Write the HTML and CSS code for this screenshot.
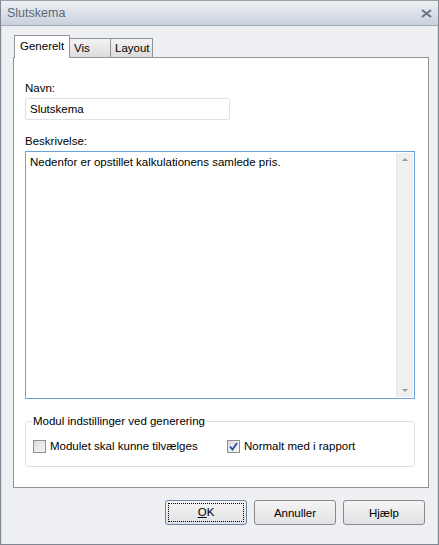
FILE: index.html
```html
<!DOCTYPE html>
<html lang="da">
<head>
    <meta charset="UTF-8">
    <title>Slutskema</title>
    <link rel="stylesheet" href="styles.css">
</head>
<body>

    <div class="window">
        <div class="titlebar">
            <span class="title">Slutskema</span>
            <svg class="close" width="11" height="9" viewBox="0 0 11 9">
                <path d="M1 1 L10 8 M10 1 L1 8" stroke="#6b7684" stroke-width="2"/>
            </svg>
        </div>

        <div class="client">
            <div class="tabs">
                <div class="tab active">Generelt</div>
                <div class="tab">Vis</div>
                <div class="tab">Layout</div>
            </div>

            <div class="panel">
                <div class="field">
                    <div class="label">Navn:</div>
                    <div class="input">Slutskema</div>
                </div>

                <div class="field grow">
                    <div class="label">Beskrivelse:</div>
                    <div class="textarea">
                        <div class="text">Nedenfor er opstillet kalkulationens samlede pris.</div>
                        <div class="scrollbar">
                            <span class="arrow up"></span>
                            <span class="arrow down"></span>
                        </div>
                    </div>
                </div>

                <fieldset class="group">
                    <legend>Modul indstillinger ved generering</legend>
                    <div class="checks">
                        <label class="check first"><span class="box"></span>Modulet skal kunne tilvælges</label>
                        <label class="check"><span class="box checked">
                            <svg width="11" height="11" viewBox="0 0 11 11">
                                <path d="M2 5.5 L4.5 8.5 L9 2" fill="none" stroke="#2a4fa8" stroke-width="1.8"/>
                            </svg>
                        </span>Normalt med i rapport</label>
                    </div>
                </fieldset>
            </div>

            <div class="buttons">
                <button class="btn default"><span class="focus"><u>O</u>K</span></button>
                <button class="btn">Annuller</button>
                <button class="btn">Hjælp</button>
            </div>
        </div>
    </div>

</body>
</html>
```

FILE: styles.css
```css
body {
    margin: 0;
    padding: 0;
    font-family: "Liberation Sans", Arial, sans-serif;
    font-size: 11.5px;
    color: #000;
    background: #fff;
}

.window {
    width: 439px;
    height: 545px;
    box-sizing: border-box;
    border: 1px solid #7f8792;
    border-top-color: #9aa2ad;
    background-color: #eeeff2;
    display: flex;
    flex-direction: column;
}

.titlebar {
    height: 25px;
    box-sizing: border-box;
    border-bottom: 1px solid #a3abb6;
    background: linear-gradient(#eef0f3, #dde2e9 45%, #c9d1db);
    display: flex;
    align-items: center;
    justify-content: space-between;
    padding: 0 6px 0 6px;
}

.title {
    font-family: "Liberation Sans", Arial, sans-serif;
    font-size: 12.5px;
    color: #5d6876;
}

.client {
    flex: 1;
    display: flex;
    flex-direction: column;
    padding: 9px 9px 0 11px;
    border-left: 1px solid #d8dce2;
    border-right: 1px solid #d8dce2;
}

.tabs {
    display: flex;
    align-items: flex-end;
    height: 22px;
    padding-left: 1px;
}

.tab {
    height: 19px;
    box-sizing: border-box;
    border: 1px solid #8f9499;
    border-bottom: none;
    border-left: none;
    background: linear-gradient(#f4f4f4, #dcdcdc);
    padding: 3px 0 0 4px;
    width: 42px;
}

.tab:nth-child(2) {
    width: 41px;
}

.tab.active {
    height: 23px;
    width: 56px;
    border-left: 1px solid #8f9499;
    background: #fff;
    padding: 4px 0 0 5px;
    margin-bottom: -1px;
    position: relative;
    z-index: 1;
}

.panel {
    height: 431px;
    box-sizing: border-box;
    width: 416px;
    border: 1px solid #8f9499;
    background: #fff;
    padding: 23px 13px 20px 11px;
    display: flex;
    flex-direction: column;
}

.field {
    display: flex;
    flex-direction: column;
}

.label {
    height: 15px;
    line-height: 15px;
    margin-bottom: 2px;
}

.input {
    width: 205px;
    height: 22px;
    box-sizing: border-box;
    border: 1px solid #dfe3e8;
    border-radius: 2px;
    padding: 3px 4px;
    line-height: 14px;
    margin-bottom: 14px;
}

.grow {
    flex: 1;
}

.textarea {
    flex: 1;
    border: 1px solid #6aa3dc;
    display: flex;
}

.text {
    flex: 1;
    padding: 3px 4px;
    line-height: 14px;
}

.scrollbar {
    width: 16px;
    margin: 1px 1px 1px 0;
    background: #f0f0f0;
    border-left: 1px solid #e4e4e4;
    display: flex;
    flex-direction: column;
    justify-content: space-between;
    align-items: center;
    padding: 5px 0;
}

.arrow {
    width: 0;
    height: 0;
    border-left: 3px solid transparent;
    border-right: 3px solid transparent;
}

.arrow.up {
    border-bottom: 3px solid #9a9a9a;
}

.arrow.down {
    border-top: 3px solid #9a9a9a;
}

.group {
    margin: 16px 0 0 0;
    border: 1px solid #d5dde5;
    border-radius: 3px;
    padding: 11px 8px 12px 8px;
    min-inline-size: 0;
}

.group legend {
    padding: 0 1px 0 1px;
    margin-left: -2px;
}

.checks {
    display: flex;
}

.check {
    display: flex;
    align-items: center;
    height: 16px;
    margin-left: -1px;
}

.check.first {
    width: 195px;
}

.box {
    width: 13px;
    height: 13px;
    box-sizing: border-box;
    border: 1px solid #8f8f8f;
    background: linear-gradient(135deg, #dcdcdc, #f6f6f6);
    margin-right: 4px;
    display: flex;
    align-items: center;
    justify-content: center;
}

.buttons {
    display: flex;
    justify-content: flex-end;
    gap: 7px;
    padding: 12px 3px 0 0;
}

.btn {
    width: 82px;
    height: 25px;
    border: 1px solid #8a8a8a;
    border-radius: 3px;
    background: linear-gradient(#f5f5f5, #ebebeb 50%, #dfe2e6);
    font-family: "Liberation Sans", Arial, sans-serif;
    font-size: 11.5px;
    color: #000;
    padding: 0;
    margin: 0;
}

.btn.default {
    border-color: #6d86a3;
    padding: 2px;
}

.focus {
    display: block;
    height: 100%;
    box-sizing: border-box;
    border: 1px dotted #000;
    line-height: 17px;
}
```
